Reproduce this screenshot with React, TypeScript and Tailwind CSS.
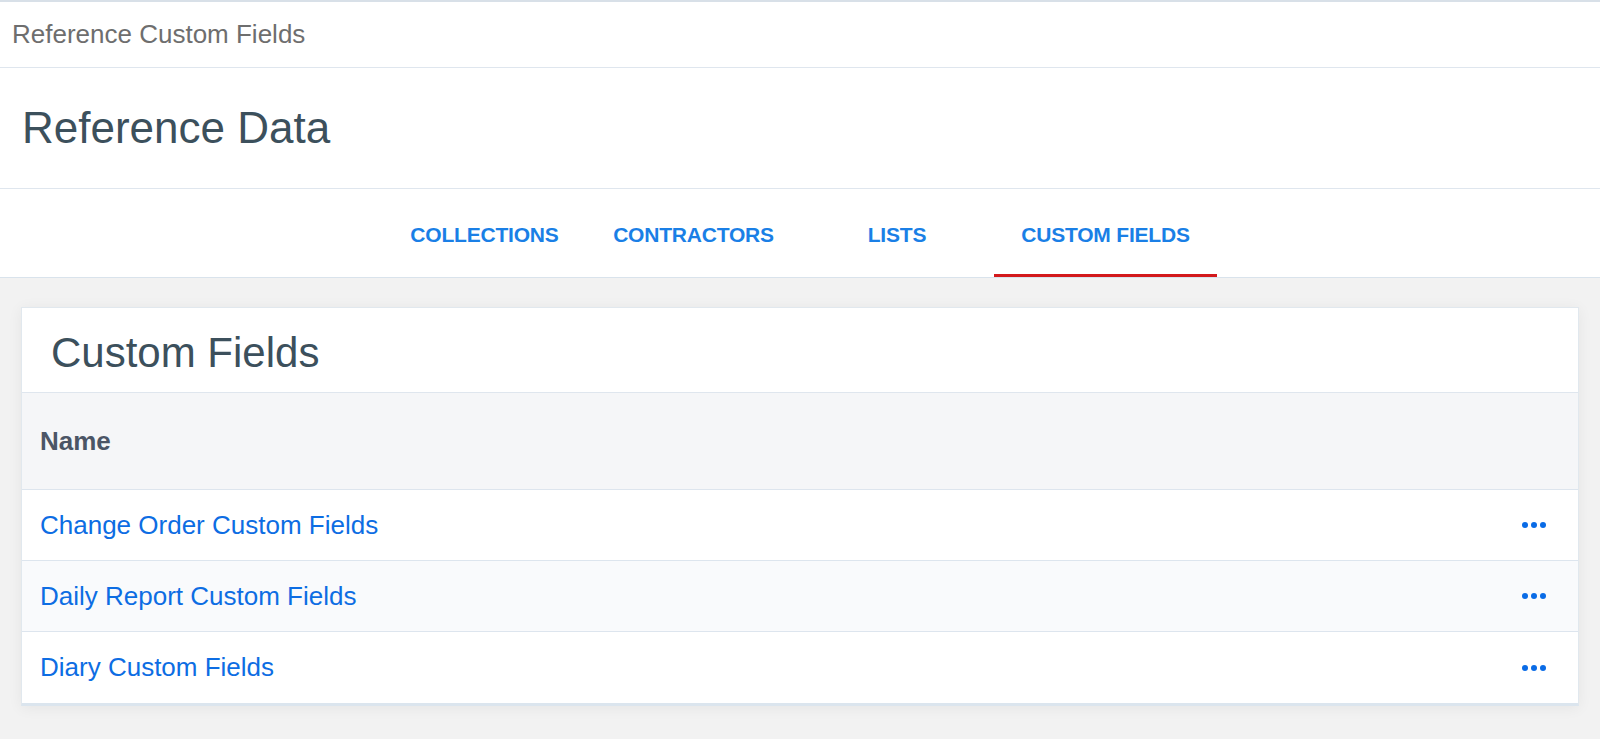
const tabs = [
  { label: "COLLECTIONS", w: "w-[205px]" },
  { label: "CONTRACTORS", w: "w-[213px]" },
  { label: "LISTS", w: "w-[194px]" },
  { label: "CUSTOM FIELDS", w: "w-[223px]", active: true },
];

const rows = ["Change Order Custom Fields", "Daily Report Custom Fields", "Diary Custom Fields"];

function Dots() {
  return (
    <button className="flex items-center gap-[3px] px-0">
      <span className="w-[6px] h-[6px] rounded-full bg-[#0a6be6]" />
      <span className="w-[6px] h-[6px] rounded-full bg-[#0a6be6]" />
      <span className="w-[6px] h-[6px] rounded-full bg-[#0a6be6]" />
    </button>
  );
}

export default function App() {
  return (
    <div className="min-h-[739px] bg-[#f2f2f2] font-['Liberation_Sans',Arial,sans-serif]">
      {/* breadcrumb */}
      <div className="h-[68px] bg-white border-t-2 border-[#d8e0e8] border-b border-b-[#dfe6ee] flex items-center pl-[12px]">
        <span className="text-[26px] text-[#6e6e6e]">Reference Custom Fields</span>
      </div>

      {/* page title */}
      <div className="h-[121px] bg-white border-b border-[#dfe6ee] flex items-center pl-[22px]">
        <h1 className="text-[44px] text-[#3c505c] leading-none">Reference Data</h1>
      </div>

      {/* tabs */}
      <div className="h-[89px] bg-white border-b border-[#d9e3ec] flex pl-[382px]">
        {tabs.map((t) => (
          <div
            key={t.label}
            className={`${t.w} flex items-center justify-center pt-[6px] border-b-[3px] ${
              t.active ? "border-[#d3191c]" : "border-transparent"
            }`}
          >
            <span className="text-[21px] font-bold text-[#1a7fe6] tracking-[-0.2px]">{t.label}</span>
          </div>
        ))}
      </div>

      {/* card */}
      <div className="px-[21px] pt-[29px] pb-[33px]">
        <div className="bg-white border border-[#e1e8ee] border-b-[3px] border-b-[#dbe5ee] shadow-[0_2px_14px_rgba(0,0,0,0.06)]">
          <div className="h-[85px] flex items-center pl-[29px] pt-[6px] border-b border-[#dfe6ee]">
            <h2 className="text-[42px] text-[#3c505c] leading-none">Custom Fields</h2>
          </div>
          <div className="h-[97px] flex items-center pl-[18px] bg-[#f5f6f8] border-b border-[#dde5ee]">
            <span className="text-[26px] font-bold text-[#4b5566]">Name</span>
          </div>
          {rows.map((r, i) => (
            <div
              key={r}
              className={`h-[71px] flex items-center justify-between pl-[18px] pr-[32px] ${
                i % 2 === 1 ? "bg-[#f9fafc]" : "bg-white"
              } ${i < rows.length - 1 ? "border-b border-[#dde5ee]" : ""}`}
            >
              <a href="#" className="text-[26px] text-[#0d6de3]">
                {r}
              </a>
              <Dots />
            </div>
          ))}
        </div>
      </div>
    </div>
  );
}
